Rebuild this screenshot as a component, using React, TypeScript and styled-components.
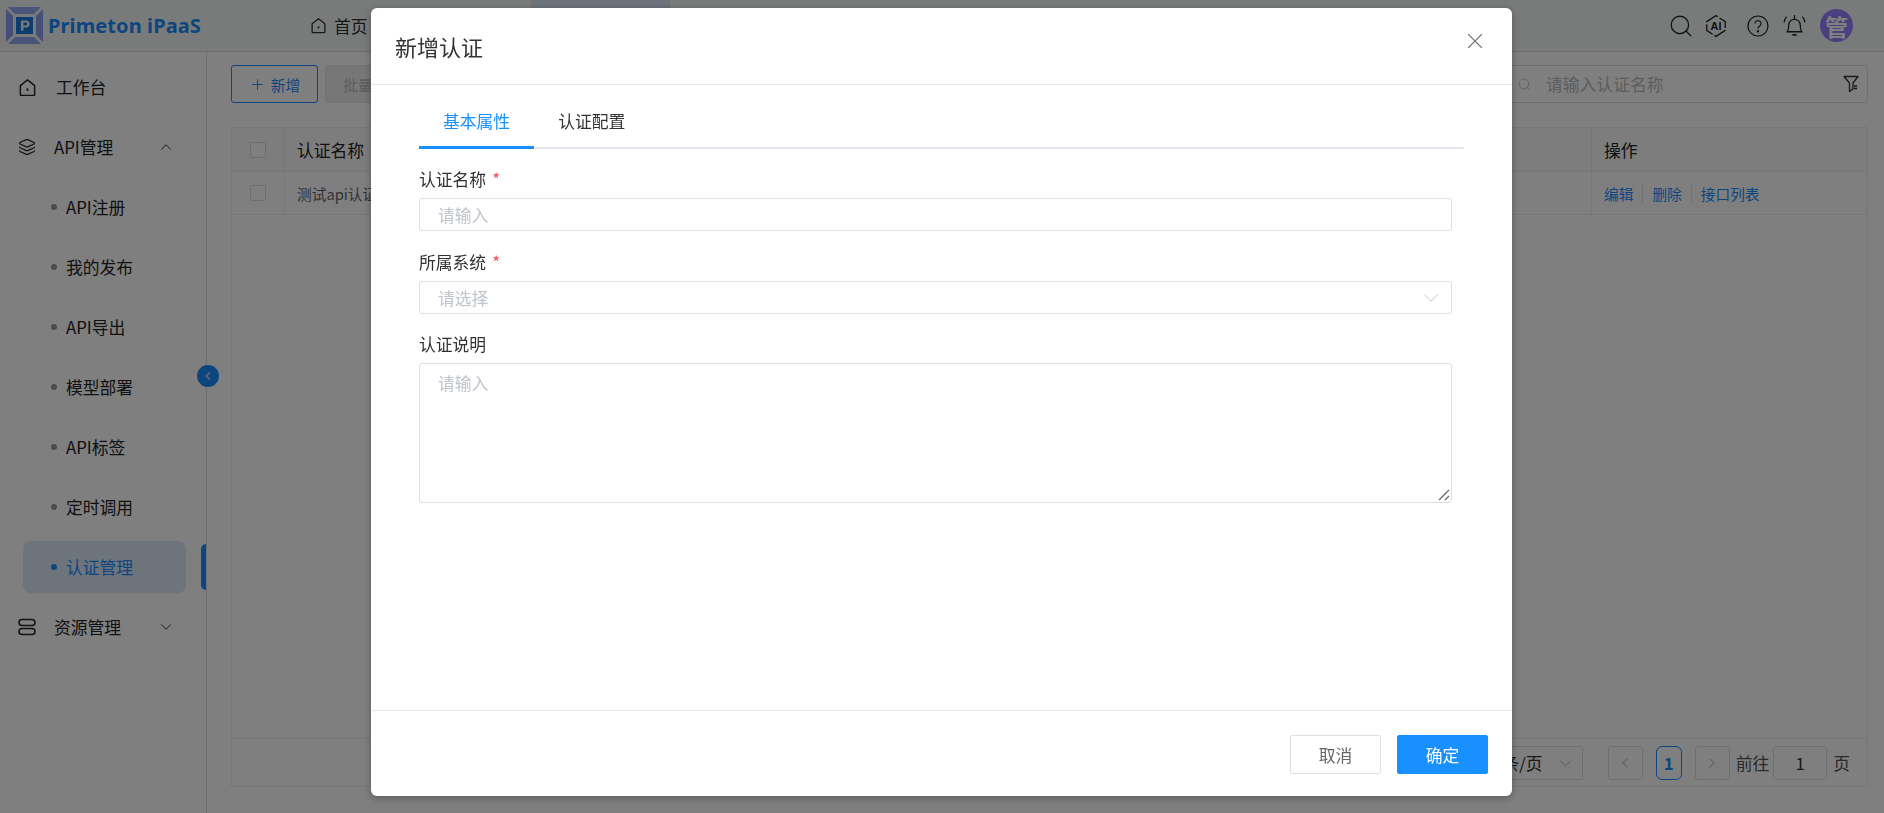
import React from "react";
import styled, { createGlobalStyle } from "styled-components";
import { X, ChevronDown, ChevronUp, ChevronLeft, ChevronRight, Plus, Search, Layers } from "lucide-react";

const GlobalStyle = createGlobalStyle`
  * { box-sizing: border-box; }
  html, body { margin: 0; padding: 0; height: 100%; overflow: hidden; }
  body {
    font-family: "Noto Sans CJK SC", "Noto Sans", sans-serif;
    color: #303133;
    background: #fff;
  }
`;

const Page = styled.div`
  width: 100vw;
  height: 100vh;
  display: flex;
  flex-direction: column;
  background: #fff;
`;

const TopBar = styled.header`
  height: 52px;
  flex: none;
  display: flex;
  align-items: center;
  padding: 0 31px 0 6px;
  background: #f3f7f7;
  border-bottom: 1px solid #d8dcdc;
`;

const Brand = styled.div`
  width: 304px;
  display: flex;
  align-items: center;
  gap: 5px;
  color: #1a8cff;
  font-family: "Noto Sans", sans-serif;
  font-size: 20px;
  font-weight: 700;
  letter-spacing: 0.1px;
`;

const TopNav = styled.nav`
  display: flex;
  flex: 1;
  align-items: stretch;
  height: 100%;
`;

const TopLink = styled.div`
  width: 221px;
  display: flex;
  align-items: center;
  gap: 7px;
  font-size: 16.8px;
`;

const TopActive = styled.div`
  width: 139px;
  background: #dce8f8;
`;

const TopTools = styled.div`
  display: flex;
  align-items: center;
  color: #222;
`;

const ToolSlot = styled.span<{ $w: number }>`
  width: ${(p) => p.$w}px;
  display: flex;
`;

const Avatar = styled.div`
  width: 33px;
  height: 33px;
  border-radius: 50%;
  background: #9580ff;
  color: #fff;
  display: flex;
  align-items: center;
  justify-content: center;
  font-size: 23px;
  font-weight: 700;
`;

const Body = styled.div`
  flex: 1;
  display: flex;
  min-height: 0;
`;

const Sidebar = styled.aside`
  position: relative;
  width: 207px;
  flex: none;
  padding-top: 5px;
  border-right: 1px solid #dcdfe6;
`;

const GroupRow = styled.div`
  height: 60px;
  display: flex;
  align-items: center;
  padding-left: 18px;
  font-size: 16.8px;
  color: #222;
`;

const GroupLabel = styled.span<{ $w: number; $gap?: number }>`
  width: ${(p) => p.$w}px;
  margin-left: ${(p) => p.$gap ?? 18}px;
`;

const SubList = styled.div`
  display: flex;
  flex-direction: column;
`;

const SubItem = styled.div<{ $active?: boolean }>`
  height: 60px;
  display: flex;
  align-items: center;
  position: relative;
  padding-left: 51px;
  gap: 9px;
  font-size: 16.8px;
  color: ${(p) => (p.$active ? "#1a8cff" : "#222")};

  ${(p) =>
    p.$active &&
    `
    &::before {
      content: "";
      position: absolute;
      left: 23px;
      top: 4px;
      width: 163px;
      height: 52px;
      border-radius: 8px;
      background: #dce8f8;
    }
    &::after {
      content: "";
      position: absolute;
      right: 0;
      top: 7px;
      width: 5px;
      height: 46px;
      border-radius: 5px 0 0 5px;
      background: #1a8cff;
    }
  `}
`;

const Dot = styled.i<{ $active?: boolean }>`
  position: relative;
  width: 6px;
  height: 6px;
  border-radius: 50%;
  background: ${(p) => (p.$active ? "#1a8cff" : "#999")};
`;

const SubText = styled.span`
  position: relative;
`;

const CollapseBtn = styled.div`
  position: absolute;
  left: 197px;
  top: 313px;
  width: 22px;
  height: 22px;
  border-radius: 50%;
  background: #1a8cff;
  color: #ddd;
  display: flex;
  align-items: center;
  justify-content: center;
`;

const Main = styled.main`
  flex: 1;
  min-width: 0;
  padding: 13px 16px 26px 24px;
  display: flex;
  flex-direction: column;
`;

const Toolbar = styled.div`
  display: flex;
  justify-content: space-between;
  margin-bottom: 24px;
`;

const ToolGroup = styled.div`
  display: flex;
  gap: 7px;
`;

const OutlineBtn = styled.div`
  width: 87px;
  height: 38px;
  border: 1px solid #1a8cff;
  border-radius: 3px;
  color: #1a8cff;
  font-size: 14.7px;
  display: flex;
  align-items: center;
  justify-content: center;
  gap: 5px;
`;

const GhostBtn = styled(OutlineBtn)`
  background: #eee;
  border-color: #e4e4e4;
  color: #bbb;
  justify-content: flex-start;
  padding-left: 17px;
`;

const SearchBox = styled.div`
  width: 400px;
  height: 38px;
  border: 1px solid #dcdfe6;
  border-radius: 3px;
  display: flex;
  align-items: center;
  padding: 0 8px 0 48px;
  gap: 14px;
  font-size: 16.8px;
  color: #bbb;
`;

const SearchText = styled.span`
  flex: 1;
`;

const TableWrap = styled.div`
  flex: 1;
  display: flex;
  flex-direction: column;
  border: 1px solid #ebeef5;
`;

const Row = styled.div<{ $head?: boolean }>`
  display: grid;
  grid-template-columns: 53px 1fr 275px;
  height: ${(p) => (p.$head ? "44px" : "43px")};
  border-bottom: 1px solid #ebeef5;
  background: ${(p) => (p.$head ? "#fafafa" : "#fff")};
  font-size: ${(p) => (p.$head ? "16.8px" : "14.7px")};
  color: ${(p) => (p.$head ? "#222" : "#666")};
`;

const Cell = styled.div`
  display: flex;
  align-items: center;
  padding-left: 12px;
  border-right: 1px solid #ebeef5;

  &:last-child {
    border-right: 0;
  }
`;

const CheckCell = styled(Cell)`
  justify-content: center;
  padding-left: 0;
`;

const CheckBox = styled.span`
  width: 16px;
  height: 16px;
  border: 1px solid #ddd;
  border-radius: 2px;
  background: #fff;
`;

const OpLink = styled.span`
  color: #1a8cff;
  padding-right: 9px;
  margin-right: 9px;
  border-right: 1px solid #e4e4e4;

  &:last-child {
    border-right: 0;
  }
`;

const Spacer = styled.div`
  flex: 1;
`;

const Pager = styled.div`
  height: 48px;
  border-top: 1px solid #ebeef5;
  display: flex;
  align-items: center;
  justify-content: flex-end;
  padding-right: 17px;
  padding-top: 1px;
  font-size: 16.8px;
  color: #555;
`;

const PagerBox = styled.div<{ $w: number; $active?: boolean }>`
  width: ${(p) => p.$w}px;
  height: 34px;
  border: 1px solid ${(p) => (p.$active ? "#1a8cff" : "#dcdfe6")};
  border-radius: ${(p) => (p.$active ? "6px" : "3px")};
  color: ${(p) => (p.$active ? "#1a8cff" : "#333")};
  font-weight: ${(p) => (p.$active ? 700 : 400)};
  display: flex;
  align-items: center;
  justify-content: center;
  flex: none;
`;

const PagerSize = styled(PagerBox)`
  margin-right: 25px;
  justify-content: flex-end;
  gap: 13px;
  padding-right: 7px;
  color: #333;
`;

const PagerChevron = styled.span`
  display: flex;
  color: #ccc;
`;

const PagerNum = styled(PagerBox)`
  margin: 0 13px;
`;

const PagerGoto = styled(PagerBox)`
  margin: 0 6px 0 4px;
`;

const PagerLabel = styled.span`
  margin-left: 6px;
`;

const Mask = styled.div`
  position: fixed;
  inset: 0;
  background: rgba(0, 0, 0, 0.5);
  display: flex;
  justify-content: center;
  align-items: flex-start;
  padding: 8px 1px 0 0;
`;

const Dialog = styled.div`
  width: 1141px;
  height: 788px;
  background: #fff;
  border-radius: 6px;
  display: flex;
  flex-direction: column;
  box-shadow: 0 2px 8px rgba(0, 0, 0, 0.3);
`;

const DialogHead = styled.div`
  height: 77px;
  flex: none;
  display: flex;
  align-items: center;
  justify-content: space-between;
  padding: 0 24px 10px 24px;
  border-bottom: 1px solid #e8e8e8;
`;

const DialogTitle = styled.div`
  font-size: 22px;
  color: #333;
  padding-top: 10px;
`;

const CloseBtn = styled.span`
  display: flex;
  color: #777;
`;

const DialogBody = styled.div`
  flex: 1;
  padding: 0 48px;
`;

const Tabs = styled.div`
  height: 64px;
  display: flex;
  align-items: stretch;
  border-bottom: 2px solid #e4e7ed;
`;

const Tab = styled.div<{ $active?: boolean }>`
  display: flex;
  align-items: center;
  padding: 10px 24px 0;
  margin-bottom: -2px;
  font-size: 16.8px;
  color: ${(p) => (p.$active ? "#1890ff" : "#333")};
  border-bottom: 3px solid ${(p) => (p.$active ? "#1890ff" : "transparent")};
`;

const Form = styled.div`
  padding-right: 12px;
`;

const Field = styled.div`
  margin-top: 14px;

  & + & {
    margin-top: 14.5px;
  }
`;

const Label = styled.div<{ $required?: boolean }>`
  height: 35px;
  line-height: 33px;
  font-size: 16.8px;
  color: #303133;

  ${(p) =>
    p.$required &&
    `
    &::after {
      content: "*";
      margin-left: 6px;
      color: #ff4d4f;
    }
  `}
`;

const Input = styled.div`
  height: 33px;
  border: 1px solid #dcdfe6;
  border-radius: 3px;
  display: flex;
  align-items: center;
  justify-content: space-between;
  padding: 1px 7px 0 18px;
  font-size: 16.8px;
  color: #c0c4cc;
`;

const TextArea = styled.div`
  position: relative;
  height: 140px;
  border: 1px solid #dcdfe6;
  border-radius: 3px;
  padding: 7px 18px;
  font-size: 16.8px;
  color: #c0c4cc;
`;

const Grip = styled.svg`
  position: absolute;
  right: 1px;
  bottom: 1px;
`;

const DialogFoot = styled.div`
  height: 86px;
  flex: none;
  display: flex;
  justify-content: flex-end;
  align-items: flex-start;
  gap: 16px;
  padding: 24px 24px 0;
  border-top: 1px solid #e8e8e8;
`;

const FootBtn = styled.div<{ $primary?: boolean }>`
  width: 91px;
  height: 39px;
  border: 1px solid ${(p) => (p.$primary ? "#1890ff" : "#dcdfe6")};
  border-radius: 2px;
  background: ${(p) => (p.$primary ? "#1890ff" : "#fff")};
  color: ${(p) => (p.$primary ? "#fff" : "#666")};
  font-size: 16.8px;
  display: flex;
  align-items: center;
  justify-content: center;
`;

const Logo = () => (
  <svg width="37" height="37" viewBox="0 0 37 37">
    <path d="M2 0h33L28 7H9Z" fill="#94a6f0" />
    <path d="M2 37h33L28 30H9Z" fill="#94a6f0" />
    <path d="M0 2v33L7 28V9Z" fill="#8a9eee" />
    <path d="M37 2v33L30 28V9Z" fill="#8a9eee" />
    <rect x="10" y="10" width="17" height="17" fill="#1a7be0" />
    <path d="M15 13.500h5a3.500 3.500 0 0 1 0 7h-2.600v3.200H15Zm2.400 2.100v2.800h2.400a1.400 1.400 0 0 0 0-2.800Z" fill="#f0f0f0" />
  </svg>
);

const HomeIcon = ({ size }: { size: number }) => (
  <svg width={size} height={size} viewBox="0 0 20 20" fill="none" stroke="currentColor" strokeWidth="1.500" strokeLinejoin="round">
    <path d="M2.500 8 10 2l7.500 6v9.500a.8.8 0 0 1-.8.8H3.300a.8.8 0 0 1-.8-.8Z" />
    <path d="M10 11v2.500" strokeWidth="2" />
  </svg>
);

const AiIcon = () => (
  <svg width="24" height="24" viewBox="0 0 22 22" fill="none" stroke="currentColor" strokeWidth="1.200">
    <path d="M2.500 7 11 1.500 19.500 7v8L11 20.500 2.500 15Z" strokeDasharray="12 2" />
    <text x="11" y="14.500" textAnchor="middle" fontSize="10" fontWeight="700" fill="currentColor" stroke="none" fontFamily="Liberation Sans">AI</text>
  </svg>
);

const HelpIcon = () => (
  <svg width="22" height="22" viewBox="0 0 22 22" fill="none" stroke="currentColor" strokeWidth="1.200">
    <circle cx="11" cy="11" r="10" />
    <path d="M8 8.500a3 3 0 1 1 4.600 2.600c-1 .6-1.600 1.200-1.600 2.600" />
    <circle cx="11" cy="16.300" r=".6" fill="currentColor" />
  </svg>
);

const BellIcon = () => (
  <svg width="23" height="25" viewBox="0 0 22 24" fill="none" stroke="currentColor" strokeWidth="1.200">
    <path d="M4 18c1.500-2 1.500-3.500 1.500-6.500a5.500 5.500 0 0 1 11 0c0 3 0 4.500 1.500 6.500Z" />
    <path d="M9 21h4" strokeWidth="1.600" />
    <path d="M3.500 3.500C2 5 1.200 6.800 1 9M18.500 3.500C20 5 20.800 6.800 21 9" />
    <path d="M11 2v4" />
  </svg>
);

const ServerIcon = () => (
  <svg width="18" height="18" viewBox="0 0 18 18" fill="none" stroke="currentColor" strokeWidth="1.500">
    <rect x="1" y="1.500" width="16" height="6" rx="3" />
    <rect x="1" y="10.500" width="16" height="6" rx="3" />
  </svg>
);

const FilterIcon = () => (
  <svg width="16" height="18" viewBox="0 0 16 18" fill="none" stroke="#333" strokeWidth="1.300" strokeLinejoin="round">
    <path d="M1 1.500h14L10 8v6l-3.500 2.500V8Z" />
    <path d="M11 11h3M11 13.500h3" />
  </svg>
);

const ResizeGrip = () => (
  <Grip width="12" height="12" viewBox="0 0 12 12" stroke="#666" strokeWidth="1.200">
    <path d="M1 11 11 1M7 11l4-4" />
  </Grip>
);

const subItems = ["API注册", "我的发布", "API导出", "模型部署", "API标签", "定时调用", "认证管理"];

export default function App() {
  return (
    <Page>
      <GlobalStyle />
      <TopBar>
        <Brand>
          <Logo />
          Primeton iPaaS
        </Brand>
        <TopNav>
          <TopLink>
            <HomeIcon size={17} />
            首页
          </TopLink>
          <TopActive />
        </TopNav>
        <TopTools>
          <ToolSlot $w={36}><Search size={26} strokeWidth={1.2} /></ToolSlot>
          <ToolSlot $w={43}><AiIcon /></ToolSlot>
          <ToolSlot $w={36}><HelpIcon /></ToolSlot>
          <ToolSlot $w={37}><BellIcon /></ToolSlot>
          <Avatar>管</Avatar>
        </TopTools>
      </TopBar>
      <Body>
        <Sidebar>
          <GroupRow>
            <HomeIcon size={19} />
            <GroupLabel $w={100} $gap={19}>工作台</GroupLabel>
          </GroupRow>
          <GroupRow>
            <Layers size={18} strokeWidth={1.5} />
            <GroupLabel $w={103}>API管理</GroupLabel>
            <ChevronUp size={18} strokeWidth={1.2} />
          </GroupRow>
          <SubList>
            {subItems.map((label) => {
              const active = label === "认证管理";
              return (
                <SubItem key={label} $active={active}>
                  <Dot $active={active} />
                  <SubText>{label}</SubText>
                </SubItem>
              );
            })}
          </SubList>
          <GroupRow>
            <ServerIcon />
            <GroupLabel $w={103}>资源管理</GroupLabel>
            <ChevronDown size={18} strokeWidth={1.2} />
          </GroupRow>
          <CollapseBtn>
            <ChevronLeft size={14} strokeWidth={2} />
          </CollapseBtn>
        </Sidebar>
        <Main>
          <Toolbar>
            <ToolGroup>
              <OutlineBtn>
                <Plus size={17} strokeWidth={1.3} />
                新增
              </OutlineBtn>
              <GhostBtn>批量</GhostBtn>
            </ToolGroup>
            <SearchBox>
              <Search size={15} strokeWidth={1.4} />
              <SearchText>请输入认证名称</SearchText>
              <FilterIcon />
            </SearchBox>
          </Toolbar>
          <TableWrap>
            <Row $head>
              <CheckCell><CheckBox /></CheckCell>
              <Cell>认证名称</Cell>
              <Cell>操作</Cell>
            </Row>
            <Row>
              <CheckCell><CheckBox /></CheckCell>
              <Cell>测试api认证</Cell>
              <Cell>
                <OpLink>编辑</OpLink>
                <OpLink>删除</OpLink>
                <OpLink>接口列表</OpLink>
              </Cell>
            </Row>
            <Spacer />
            <Pager>
              <PagerSize $w={150}>
                10条/页
                <PagerChevron><ChevronDown size={19} strokeWidth={1.3} /></PagerChevron>
              </PagerSize>
              <PagerBox $w={35}><ChevronLeft size={16} color="#ccc" /></PagerBox>
              <PagerNum $w={26} $active>1</PagerNum>
              <PagerBox $w={35}><ChevronRight size={16} color="#ccc" /></PagerBox>
              <PagerLabel>前往</PagerLabel>
              <PagerGoto $w={54}>1</PagerGoto>
              <span>页</span>
            </Pager>
          </TableWrap>
        </Main>
      </Body>
      <Mask>
        <Dialog>
          <DialogHead>
            <DialogTitle>新增认证</DialogTitle>
            <CloseBtn><X size={26} strokeWidth={1} /></CloseBtn>
          </DialogHead>
          <DialogBody>
            <Tabs>
              <Tab $active>基本属性</Tab>
              <Tab>认证配置</Tab>
            </Tabs>
            <Form>
              <Field>
                <Label $required>认证名称</Label>
                <Input>请输入</Input>
              </Field>
              <Field>
                <Label $required>所属系统</Label>
                <Input>
                  请选择
                  <ChevronDown size={26} strokeWidth={0.9} />
                </Input>
              </Field>
              <Field>
                <Label>认证说明</Label>
                <TextArea>
                  请输入
                  <ResizeGrip />
                </TextArea>
              </Field>
            </Form>
          </DialogBody>
          <DialogFoot>
            <FootBtn>取消</FootBtn>
            <FootBtn $primary>确定</FootBtn>
          </DialogFoot>
        </Dialog>
      </Mask>
    </Page>
  );
}
